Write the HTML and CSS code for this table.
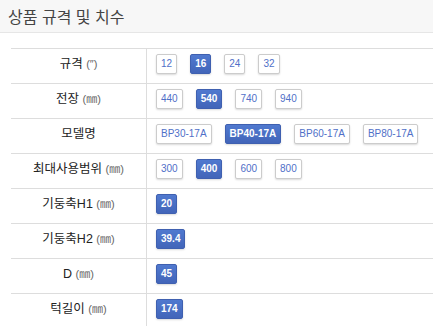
FILE: index.html
```html
<!DOCTYPE html>
<html lang="ko">

<head>
    <meta charset="UTF-8">
    <meta name="viewport" content="width=device-width, initial-scale=1.0">
    <title>상품 규격 및 치수</title>
    <link rel="stylesheet" href="styles.css">
</head>

<body>
    <div class="spec-head">상품 규격 및 치수</div>

    <div class="spec-table">
        <div class="spec-row">
            <div class="spec-name">규격 <span class="unit">(″)</span></div>
            <div class="spec-opts">
                <span class="opt">12</span>
                <span class="opt on">16</span>
                <span class="opt">24</span>
                <span class="opt">32</span>
            </div>
        </div>
        <div class="spec-row">
            <div class="spec-name">전장 <span class="unit">(㎜)</span></div>
            <div class="spec-opts">
                <span class="opt">440</span>
                <span class="opt on">540</span>
                <span class="opt">740</span>
                <span class="opt">940</span>
            </div>
        </div>
        <div class="spec-row">
            <div class="spec-name">모델명</div>
            <div class="spec-opts">
                <span class="opt">BP30-17A</span>
                <span class="opt on">BP40-17A</span>
                <span class="opt">BP60-17A</span>
                <span class="opt">BP80-17A</span>
            </div>
        </div>
        <div class="spec-row">
            <div class="spec-name">최대사용범위 <span class="unit">(㎜)</span></div>
            <div class="spec-opts">
                <span class="opt">300</span>
                <span class="opt on">400</span>
                <span class="opt">600</span>
                <span class="opt">800</span>
            </div>
        </div>
        <div class="spec-row">
            <div class="spec-name">기둥축H1 <span class="unit">(㎜)</span></div>
            <div class="spec-opts">
                <span class="opt on">20</span>
            </div>
        </div>
        <div class="spec-row">
            <div class="spec-name">기둥축H2 <span class="unit">(㎜)</span></div>
            <div class="spec-opts">
                <span class="opt on">39.4</span>
            </div>
        </div>
        <div class="spec-row">
            <div class="spec-name">D <span class="unit">(㎜)</span></div>
            <div class="spec-opts">
                <span class="opt on">45</span>
            </div>
        </div>
        <div class="spec-row">
            <div class="spec-name">턱길이 <span class="unit">(㎜)</span></div>
            <div class="spec-opts">
                <span class="opt on">174</span>
            </div>
        </div>
    </div>
</body>

</html>
```

FILE: styles.css
```css
body {
    margin: 0;
    background-color: #ffffff;
    font-family: "Liberation Sans", "Noto Sans CJK KR", sans-serif;
    color: #333333;
}

.spec-head {
    height: 32px;
    line-height: 32px;
    padding: 0 8px;
    background-color: #f7f7f7;
    border-bottom: 1px solid #e6e6e6;
    font-family: "Noto Sans CJK KR", sans-serif;
    font-size: 16px;
    color: #444444;
}

.spec-table {
    margin: 15px 0 0 11px;
    border-top: 1px solid #dddddd;
}

.spec-row {
    display: flex;
    height: 34px;
    border-bottom: 1px solid #dddddd;
}

.spec-name {
    box-sizing: border-box;
    width: 136px;
    padding-top: 5px;
    line-height: 20px;
    border-right: 1px solid #dddddd;
    text-align: center;
    font-size: 12.5px;
    color: #222222;
}

.spec-name .unit {
    font-size: 11px;
    color: #666666;
}

.spec-opts {
    display: flex;
    align-items: flex-start;
    gap: 13px;
    padding: 5px 0 0 9px;
}

.opt {
    height: 18px;
    line-height: 18px;
    padding: 0 4px;
    background-color: #ffffff;
    border: 1px solid #cccccc;
    border-radius: 2px;
    box-shadow: 0 1px 2px rgba(0, 0, 0, 0.15);
    font-size: 10px;
    color: #5070c8;
    cursor: pointer;
}

.opt.on {
    background: linear-gradient(#5079cf, #4265b9);
    border-color: #3f60b0;
    color: #ffffff;
    font-weight: bold;
}
```
